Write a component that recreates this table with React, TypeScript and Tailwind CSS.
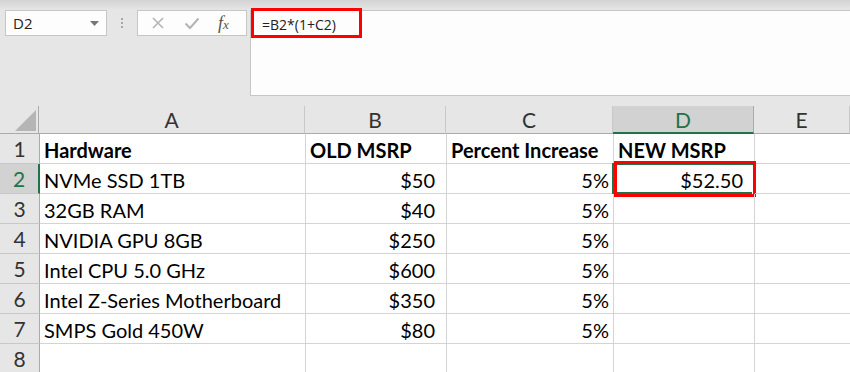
import React from "react";

const cols = [
  { w: 266, label: "A" },
  { w: 141, label: "B" },
  { w: 167, label: "C" },
  { w: 141, label: "D" },
  { w: 96, label: "E" },
];

type Row = [string, string, string, string];
const rows: Row[] = [
  ["Hardware", "OLD MSRP", "Percent Increase", "NEW MSRP"],
  ["NVMe SSD 1TB", "$50", "5%", "$52.50"],
  ["32GB RAM", "$40", "5%", ""],
  ["NVIDIA GPU 8GB", "$250", "5%", ""],
  ["Intel CPU 5.0 GHz", "$600", "5%", ""],
  ["Intel Z-Series Motherboard", "$350", "5%", ""],
  ["SMPS Gold 450W", "$80", "5%", ""],
  ["", "", "", ""],
];

const cellFont = { fontFamily: "Lato, 'Open Sans', sans-serif" };
const uiFont = { fontFamily: "'Open Sans', 'Noto Sans', sans-serif" };

export default function App() {
  return (
    <div className="w-[850px] h-[372px] overflow-hidden bg-[#e6e6e6] flex flex-col">
      {/* Formula bar area */}
      <div className="h-[106px] shrink-0 bg-[linear-gradient(#d3d3d3,#e6e6e6_10px)] pt-[10px] flex items-start" style={uiFont}>
        <div className="ml-[5px] w-[102px] h-[26px] border border-[#c6c6c6] bg-[#fdfdfd] flex items-center justify-between pl-[7px] pr-[7px]">
          <span className="text-[15px] text-[#222]">D2</span>
          <svg width="9" height="5" viewBox="0 0 9 5"><path d="M0 0h9L4.5 5z" fill="#777" /></svg>
        </div>
        <div className="w-[30px] h-[26px] flex flex-col items-center justify-center gap-[2px]">
          <span className="w-[2px] h-[2px] bg-[#a8a8a8]" />
          <span className="w-[2px] h-[2px] bg-[#a8a8a8]" />
          <span className="w-[2px] h-[2px] bg-[#a8a8a8]" />
        </div>
        <div className="w-[110px] h-[26px] border border-[#c6c6c6] bg-[#fdfdfd] flex items-center justify-around pl-[4px] pr-[8px]">
          <svg width="14" height="14" viewBox="0 0 14 14"><path d="M2 2l10 10M12 2L2 12" stroke="#b4b4b4" strokeWidth="1.6" /></svg>
          <svg width="16" height="14" viewBox="0 0 16 14"><path d="M1.5 7.5l4.5 4.5L14.5 2.5" stroke="#b4b4b4" strokeWidth="2" fill="none" /></svg>
          <span className="italic text-[#555] text-[18px] leading-none" style={{ fontFamily: "'Liberation Serif', 'DejaVu Serif', serif" }}>
            f<span className="text-[13px]">x</span>
          </span>
        </div>
        <div className="ml-[3px] flex-1 h-[86px] border-t border-b border-l border-[#c6c6c6] bg-[#fdfdfd] relative">
          <div className="absolute left-0 top-[-3px] w-[111px] h-[30px] border-[3px] border-[#ff0000]" />
          <div className="pl-[11px] pt-[3px] text-[14px] text-[#222]">=B2*(1+C2)</div>
        </div>
      </div>

      {/* Grid */}
      <div className="flex-1 bg-white" style={cellFont}>
        {/* column header row */}
        <div className="flex h-[28px] bg-[#e6e6e6]">
          <div className="w-[40px] h-full border-r border-b border-[#ababab] relative">
            <svg className="absolute left-[15px] top-[4px]" width="21" height="21" viewBox="0 0 21 21"><path d="M21 0V21H0z" fill="#b5b5b5" /></svg>
          </div>
          {cols.map((c) => {
            const sel = c.label === "D";
            return (
              <div
                key={c.label}
                style={{ width: c.w }}
                className={
                  sel
                    ? "h-full shrink-0 bg-[#d2d2d2] border-r border-[#ababab] border-b-2 border-b-[#217346] flex items-center justify-center text-[21px] text-[#217346]"
                    : "h-full shrink-0 border-r border-b border-[#c8c8c8] border-b-[#ababab] flex items-center justify-center text-[21px] text-[#333]"
                }
              >
                <span className="mt-[1px]">{c.label}</span>
              </div>
            );
          })}
        </div>
        {rows.map((r, i) => {
          const rowSel = i === 1;
          return (
            <div key={i} className="flex h-[30px]">
              <div
                className={
                  rowSel
                    ? "w-[40px] h-full shrink-0 bg-[#d2d2d2] border-r-2 border-r-[#217346] border-b border-b-[#c8c8c8] flex items-center justify-center text-[21px] text-[#217346]"
                    : "w-[40px] h-full shrink-0 bg-[#e6e6e6] border-r border-r-[#ababab] border-b border-b-[#c8c8c8] flex items-center justify-center text-[21px] text-[#333]"
                }
              >
                {i + 1}
              </div>
              {cols.map((c, j) => {
                const val = j < 4 ? r[j] : "";
                const bold = i === 0;
                const money = val.startsWith("$");
                const right = !bold && j > 0;
                const isD2 = i === 1 && j === 3;
                return (
                  <div
                    key={j}
                    style={{ width: c.w }}
                    className={
                      "h-full shrink-0 border-r border-b border-[#d4d4d4] flex items-center text-[20px] text-black whitespace-nowrap relative " +
                      (right ? "justify-end " : "justify-start pl-[4px] ") +
                      (right ? (money ? "pr-[11px] " : "pr-[4px] ") : "") +
                      (bold ? "font-bold" : "")
                    }
                  >
                    {isD2 && (
                      <>
                        <div className="absolute left-[-2px] top-[-1px] w-[143px] h-[31px] border-2 border-[#217346]" />
                        <div className="absolute right-[-3px] bottom-[-3px] w-[5px] h-[5px] bg-[#217346] border border-white" />
                        <div className="absolute left-0 top-[-3px] w-[142px] h-[36px] border-[3px] border-[#ff0000]" />
                      </>
                    )}
                    <span className="relative mt-[2px]">{val}</span>
                  </div>
                );
              })}
            </div>
          );
        })}
      </div>
    </div>
  );
}
